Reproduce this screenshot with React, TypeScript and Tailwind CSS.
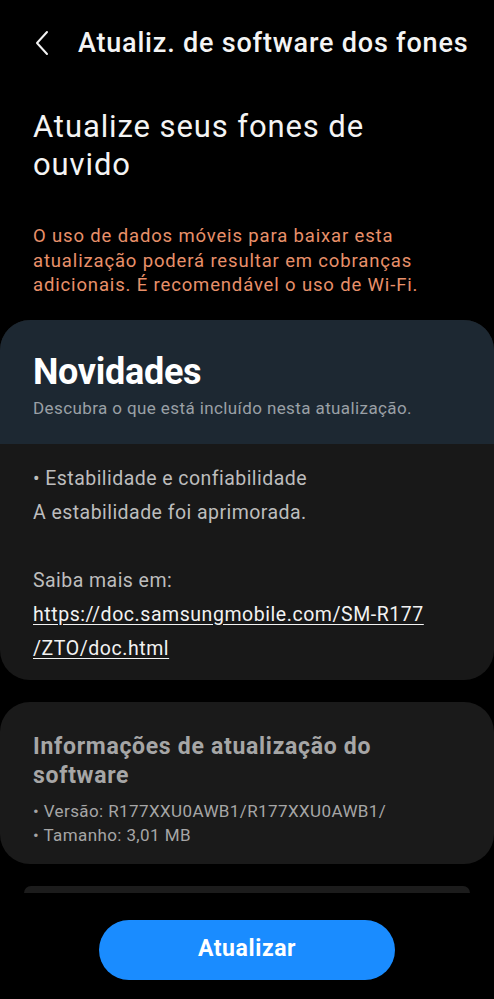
import React from "react";

const font = { fontFamily: "Roboto, 'Noto Sans', sans-serif" };

const BackIcon = () => (
  <svg width="16" height="28" viewBox="0 0 16 28" fill="none">
    <path d="M13 3 L3 14 L13 25" stroke="#f2f2f2" strokeWidth="2" strokeLinecap="round" strokeLinejoin="round" />
  </svg>
);

const App: React.FC = () => {
  return (
    <div className="h-[999px] w-full overflow-hidden bg-black" style={font}>
      {/* header */}
      <div className="flex h-[86px] items-center pl-[34px]">
        <BackIcon />
        <h2 className="ml-[28px] whitespace-nowrap text-[27px] font-medium tracking-[0.8px] text-[#f4f4f4]">
          Atualiz. de software dos fones
        </h2>
      </div>

      <h1 className="mt-[22px] px-[33px] text-[31px] leading-[38px] tracking-[0.9px] text-[#f4f4f4]">
        Atualize seus fones de
        <br />
        ouvido
      </h1>

      <p className="mt-[40px] whitespace-nowrap px-[33px] text-[18.5px] leading-[24.5px] tracking-[0.85px] text-[#e8906a]">
        O uso de dados móveis para baixar esta
        <br />
        atualização poderá resultar em cobranças
        <br />
        adicionais. É recomendável o uso de Wi-Fi.
      </p>

      {/* Novidades */}
      <div className="mt-[22px] overflow-hidden rounded-[30px] bg-[#181818]">
        <div className="bg-[#1d2832] px-[33px] pt-[30px] pb-[24px]">
          <div className="text-[36px] font-bold leading-[44px] tracking-[-0.3px] text-white">Novidades</div>
          <div className="mt-[2px] whitespace-nowrap text-[17px] leading-[24px] tracking-[0.4px] text-[#9aa0a6]">
            Descubra o que está incluído nesta atualização.
          </div>
        </div>
        <div className="whitespace-nowrap px-[33px] pt-[18px] pb-[14px] text-[19.5px] leading-[34px] tracking-[0.45px] text-[#bdbdbd]">
          <div>• Estabilidade e confiabilidade</div>
          <div>A estabilidade foi aprimorada.</div>
          <div className="h-[34px]" />
          <div>Saiba mais em:</div>
          <div className="tracking-[0.55px] text-[#f2f2f2] underline underline-offset-[3px]">
            https://doc.samsungmobile.com/SM-R177
          </div>
          <div className="tracking-[0.55px] text-[#f2f2f2] underline underline-offset-[3px]">/ZTO/doc.html</div>
        </div>
      </div>

      {/* info */}
      <div className="mt-[22px] rounded-[30px] bg-[#1a1a1a] px-[33px] pt-[30px] pb-[17px]">
        <div className="whitespace-nowrap text-[23px] font-bold leading-[29px] tracking-[0.7px] text-[#a6a6a6]">
          Informações de atualização do
          <br />
          software
        </div>
        <div className="mt-[9px] whitespace-nowrap text-[17px] leading-[24px] tracking-[0.4px] text-[#a6a6a6]">
          <div>• Versão: R177XXU0AWB1/R177XXU0AWB1/</div>
          <div>• Tamanho: 3,01 MB</div>
        </div>
      </div>

      <div className="mx-[24px] mt-[22px] h-[7px] rounded-t-full bg-[#1c1c1c]" />

      <div className="mt-[27px] flex justify-center">
        <button className="h-[60px] w-[296px] rounded-full bg-[#1a8cff] text-[23px] font-bold tracking-[0.6px] text-white">
          Atualizar
        </button>
      </div>
    </div>
  );
};

export default App;
